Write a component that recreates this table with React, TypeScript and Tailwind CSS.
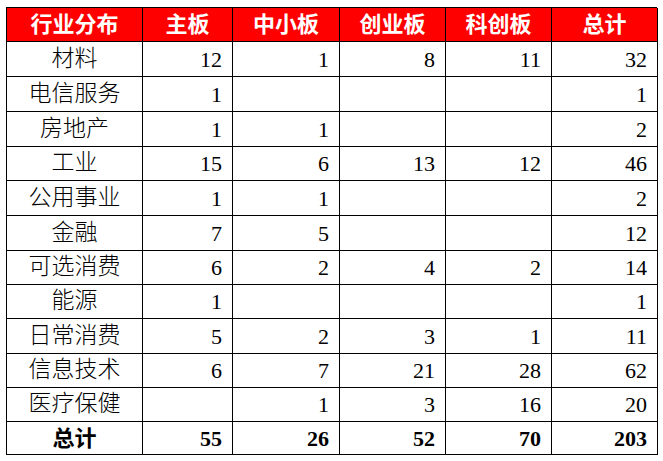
const header = ["行业分布", "主板", "中小板", "创业板", "科创板", "总计"];

const rows: (string | number | null)[][] = [
  ["材料", 12, 1, 8, 11, 32],
  ["电信服务", 1, null, null, null, 1],
  ["房地产", 1, 1, null, null, 2],
  ["工业", 15, 6, 13, 12, 46],
  ["公用事业", 1, 1, null, null, 2],
  ["金融", 7, 5, null, null, 12],
  ["可选消费", 6, 2, 4, 2, 14],
  ["能源", 1, null, null, null, 1],
  ["日常消费", 5, 2, 3, 1, 11],
  ["信息技术", 6, 7, 21, 28, 62],
  ["医疗保健", null, 1, 3, 16, 20],
];

const total = ["总计", 55, 26, 52, 70, 203];

const font = { fontFamily: '"Liberation Serif", "Noto Sans CJK SC", serif' };

export default function App() {
  return (
    <div className="w-[663px] h-[461px] bg-white pt-[7px] pl-[6px]" style={font}>
      <div className="grid grid-cols-[136px_90px_107px_106px_106px_106px] grid-rows-[34px_35px_35px_35px_34px_35px_35px_34px_34px_35px_34px_34px_33px] w-[651px] border-l border-t border-black text-[22px] text-black">
        {/* header */}
        {header.map((h) => (
          <div
            key={h}
            className="flex items-center justify-center bg-[#ff0000] text-white font-bold border-r border-b border-black"
          >
            {h}
          </div>
        ))}

        {/* data rows */}
        {rows.map((r) =>
          r.map((c, i) =>
            i === 0 ? (
              <div key={r[0] + "-" + i} className="flex items-center justify-center text-[23px] font-light border-r border-b border-black">
                {c}
              </div>
            ) : (
              <div key={r[0] + "-" + i} className="flex items-center justify-end pr-[10px] border-r border-b border-black">
                {c}
              </div>
            )
          )
        )}

        {/* total */}
        {total.map((c, i) => (
          <div
            key={"t" + i}
            className={
              i === 0
                ? "flex items-center justify-center font-bold border-r border-b border-black"
                : "flex items-center justify-end pr-[10px] font-bold border-r border-b border-black"
            }
          >
            {c}
          </div>
        ))}
      </div>
    </div>
  );
}
